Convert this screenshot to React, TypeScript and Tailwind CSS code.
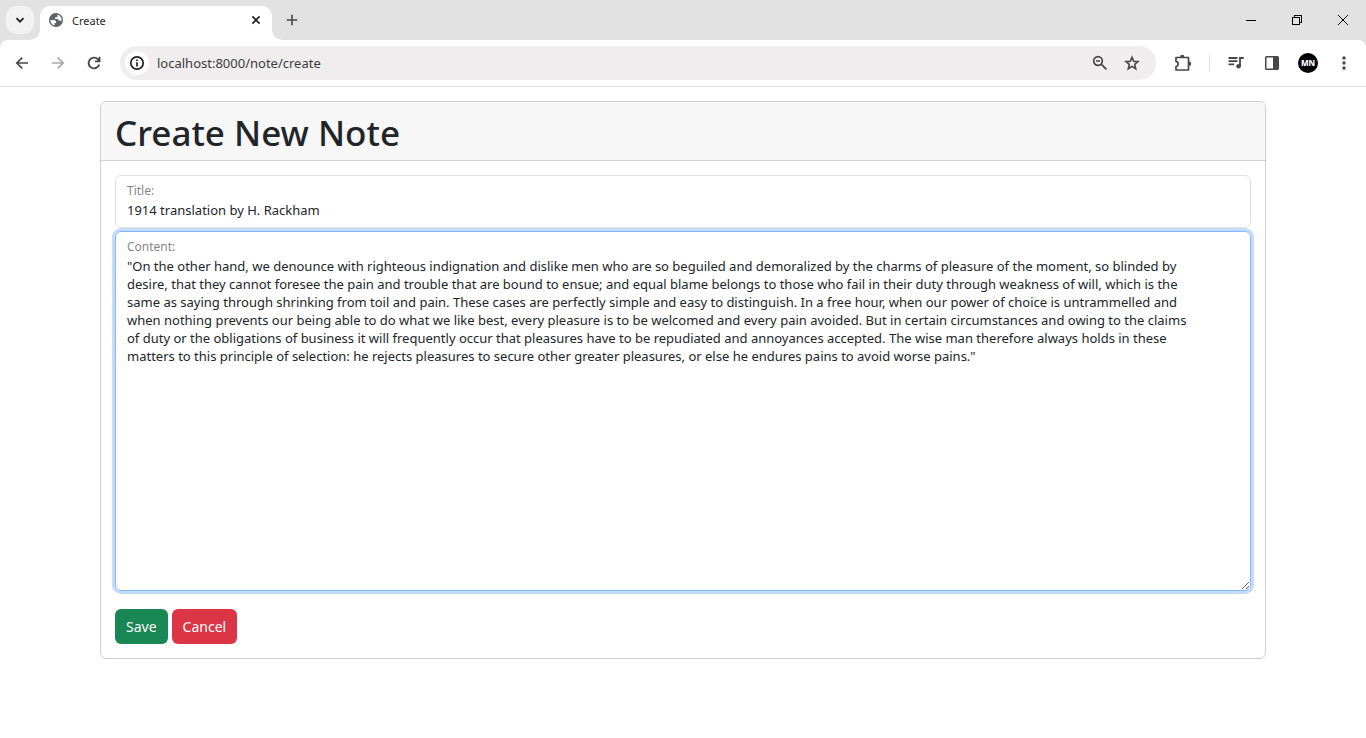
import { useState } from 'react';
import type { ReactNode } from 'react';
import { MdMoreVert } from 'react-icons/md';

const uiFont = "font-['Noto_Sans',sans-serif]";

const noteText = [
  '"On the other hand, we denounce with righteous indignation and dislike men who are so beguiled and demoralized by the charms of pleasure of the moment, so blinded by',
  'desire, that they cannot foresee the pain and trouble that are bound to ensue; and equal blame belongs to those who fail in their duty through weakness of will, which is the',
  'same as saying through shrinking from toil and pain. These cases are perfectly simple and easy to distinguish. In a free hour, when our power of choice is untrammelled and',
  'when nothing prevents our being able to do what we like best, every pleasure is to be welcomed and every pain avoided. But in certain circumstances and owing to the claims',
  'of duty or the obligations of business it will frequently occur that pleasures have to be repudiated and annoyances accepted. The wise man therefore always holds in these',
  'matters to this principle of selection: he rejects pleasures to secure other greater pleasures, or else he endures pains to avoid worse pains."',
].join('\n');

function IconButton({ label, className = '', children }: { label: string; className?: string; children: ReactNode }) {
  return (
    <button type="button" aria-label={label} className={`flex shrink-0 items-center justify-center ${className}`}>
      {children}
    </button>
  );
}

function LineIcon({ size = 16, width = 1.7, children }: { size?: number; width?: number; children: ReactNode }) {
  return (
    <svg width={size} height={size} viewBox={`0 0 ${size} ${size}`} fill="none" stroke="currentColor" strokeWidth={width}>
      {children}
    </svg>
  );
}

function GlobeIcon() {
  return (
    <svg width="16" height="16" viewBox="0 0 16 16" className="shrink-0">
      <circle cx="8" cy="8" r="7" fill="#5f6368" />
      <path d="M2.400 8h3.400c1.600 0 2.300.8 2.300 2v.9H6.500v2.500C4 12.800 2.400 10.600 2.400 8Z" fill="#fff" />
      <path
        d="M9.500 2.600c2.300.6 4.100 2.800 4.100 5.400 0 .5-.1 1-.2 1.400-.4-.6-.9-.9-1.600-.9h-.9c-.5-1.100-1.300-1.500-2.400-1.500H7V5.400h1.200c.8 0 1.300-.5 1.300-1.300Z"
        fill="#fff"
      />
    </svg>
  );
}

function TabStrip() {
  return (
    <div className="flex h-10 items-start bg-[#e2e2e2]">
      <IconButton label="Search tabs" className="mt-1.5 ml-1.5 h-7 w-7 rounded-[10px] bg-[#f1f1f1] text-[#1f1f1f]">
        <LineIcon width={1.8}>
          <path d="M4.500 6.200 8 9.700l3.500-3.500" />
        </LineIcon>
      </IconButton>
      <div className="relative mt-1.5 ml-1.5 flex h-[34px] w-[232px] items-start rounded-t-[10px] bg-white pt-1.5 pr-2 pl-2">
        <svg width="10" height="10" viewBox="0 0 10 10" className="absolute bottom-0 -left-2.5" aria-hidden="true">
          <path d="M10 0v10H0A10 10 0 0 0 10 0Z" fill="#fff" />
        </svg>
        <svg width="10" height="10" viewBox="0 0 10 10" className="absolute -right-2.5 bottom-0" aria-hidden="true">
          <path d="M0 0v10h10A10 10 0 0 1 0 0Z" fill="#fff" />
        </svg>
        <GlobeIcon />
        <span className="ml-2 flex-1 text-[11px] leading-[18px] text-[#1f1f1f]">Create</span>
        <IconButton label="Close tab" className="h-4 w-4 text-[#1f1f1f]">
          <LineIcon width={1.6}>
            <path d="m4.400 4.400 7.200 7.200M11.600 4.400l-7.200 7.200" />
          </LineIcon>
        </IconButton>
      </div>
      <IconButton label="New tab" className="mt-1.5 ml-1.5 h-7 w-7 text-[#474747]">
        <LineIcon width={1.6}>
          <path d="M8 2.700v10.600M2.700 8h10.600" />
        </LineIcon>
      </IconButton>
      <div className="ml-auto flex h-10">
        <IconButton label="Minimize" className="w-[46px]">
          <svg width="10" height="10" viewBox="0 0 10 10" shapeRendering="crispEdges">
            <path d="M0 5.5h10" stroke="#000" />
          </svg>
        </IconButton>
        <IconButton label="Restore" className="w-[46px]">
          <svg width="10" height="10" viewBox="0 0 10 10" fill="none" stroke="#000" shapeRendering="crispEdges">
            <path d="M.5 2.5h7v7h-7zM2.5 2.5v-2h7v7h-2" />
          </svg>
        </IconButton>
        <IconButton label="Close" className="w-[46px]">
          <svg width="10" height="10" viewBox="0 0 10 10" fill="none" stroke="#000">
            <path d="M0 0l10 10M10 0L0 10" />
          </svg>
        </IconButton>
      </div>
    </div>
  );
}

function Toolbar() {
  return (
    <div className="bg-[#e2e2e2]">
      <div className="flex h-[47px] items-center rounded-t-[8px] border-b border-[#dedede] bg-white pr-2 pl-2 text-[#474747]">
        <IconButton label="Back" className="h-7 w-7">
          <LineIcon>
            <path d="M14 8H3M8.200 2.600 2.800 8l5.400 5.400" />
          </LineIcon>
        </IconButton>
        <IconButton label="Forward" className="ml-2 h-7 w-7 text-[#a8a8a8]">
          <LineIcon>
            <path d="M2 8h11M7.800 2.600 13.200 8l-5.400 5.400" />
          </LineIcon>
        </IconButton>
        <IconButton label="Reload" className="ml-2 h-7 w-7">
          <LineIcon width={1.9}>
            <path d="M13.200 9.600A5.400 5.400 0 1 1 12 4.300l1 1.100M13.500 1.800v4.600H8.900" />
          </LineIcon>
        </IconButton>
        <div className="ml-3 flex h-[34px] flex-1 items-center rounded-full bg-[#efedee] pr-3 pl-[5px]">
          <IconButton label="Site information" className="h-6 w-6 rounded-full bg-white text-[#1f1f1f]">
            <LineIcon>
              <circle cx="8" cy="8" r="6.200" />
              <path d="M8 7.200v4.200M8 4.400v1.700" />
            </LineIcon>
          </IconButton>
          <input
            aria-label="Address"
            defaultValue="localhost:8000/note/create"
            className="ml-2 min-w-0 flex-1 bg-transparent pt-0.5 text-[13px] text-[#3c3c3c] outline-none"
          />
          <IconButton label="Zoom" className="h-6 w-6">
            <LineIcon>
              <circle cx="6" cy="6" r="4.300" />
              <path d="m9.200 9.200 5.200 5.200M4 6h4" />
            </LineIcon>
          </IconButton>
          <IconButton label="Bookmark this tab" className="ml-2 h-6 w-6">
            <LineIcon width={1.6}>
              <path d="m8 2.200 1.700 4 4.300.4-3.300 2.800 1 4.300L8 11.400l-3.700 2.300 1-4.300L2 6.600l4.300-.4Z" />
            </LineIcon>
          </IconButton>
        </div>
        <IconButton label="Extensions" className="ml-[13px] h-7 w-7">
          <svg width="18" height="18" viewBox="0 0 18 18">
            <path
              d="M2 3.500h12.500v12.500H2v-3.400c1.300-.2 2.100-1.300 2.100-2.600S3.300 7.600 2 7.400Z"
              fill="none"
              stroke="currentColor"
              strokeWidth="1.700"
              strokeLinejoin="round"
            />
            <path d="M6 3a2.200 2.200 0 0 1 4.400 0ZM15 7.500a2.200 2.200 0 0 1 0 4.400Z" fill="currentColor" />
          </svg>
        </IconButton>
        <span className="mx-3 h-4 w-px bg-[#dcdcdc]" />
        <IconButton label="Media controls" className="h-7 w-7">
          <LineIcon width={1.8}>
            <path d="M.5 3h9M.5 6.200h9M.5 9.400h5.500M12 11V3h3.800" />
            <circle cx="10.600" cy="11.200" r="2.300" fill="currentColor" stroke="none" />
          </LineIcon>
        </IconButton>
        <IconButton label="Side panel" className="ml-2 h-7 w-7">
          <svg width="16" height="16" viewBox="0 0 16 16">
            <path
              fillRule="evenodd"
              d="M2.500 1h11A1.500 1.500 0 0 1 15 2.500v11a1.500 1.500 0 0 1-1.500 1.500h-11A1.500 1.500 0 0 1 1 13.500v-11A1.500 1.500 0 0 1 2.500 1ZM2.500 2.500v11H9v-11Z"
              fill="currentColor"
            />
          </svg>
        </IconButton>
        <IconButton label="Profile" className="ml-2 h-7 w-7">
          <span className="flex h-5 w-5 items-center justify-center rounded-full bg-black text-[8px] font-extrabold text-white">
            MN
          </span>
        </IconButton>
        <IconButton label="Menu" className="ml-2 h-7 w-7">
          <MdMoreVert size={20} />
        </IconButton>
      </div>
    </div>
  );
}

export default function App() {
  const [title, setTitle] = useState('1914 translation by H. Rackham');
  const [content, setContent] = useState(noteText);

  return (
    <div className={`min-h-screen bg-white ${uiFont} text-[#212529]`}>
      <TabStrip />
      <Toolbar />
      <main className="mx-auto max-w-[1188px] px-[11px] pt-3.5 pb-6">
        <section className="rounded-[6px] border border-[#d0d0d0] bg-white">
          <header className="rounded-t-[5px] border-b border-[#cfcfcf] bg-[#f7f7f7] px-3.5 pt-[9px] pb-1.5">
            <h1 className="text-[35px] leading-[43px] font-medium">Create New Note</h1>
          </header>
          <form className="p-3.5" onSubmit={(e) => e.preventDefault()}>
            <div className="flex flex-col rounded-[6px] border border-[#dee2e6] px-[11px] pt-[7px] pb-1.5">
              <label htmlFor="title" className="text-[12px] leading-4 text-[#85888b]">
                Title:
              </label>
              <input
                id="title"
                value={title}
                onChange={(e) => setTitle(e.target.value)}
                className="w-full bg-transparent text-[13px] leading-[22px] outline-none"
              />
            </div>
            <div className="relative mt-[3px] h-[360px] rounded-[6px] border border-[#86b7fe] pt-[7px] ring-[3px] ring-[#c2dbfe]">
              <label htmlFor="content" className="block px-[11px] text-[12px] leading-4 text-[#85888b]">
                Content:
              </label>
              <textarea
                id="content"
                value={content}
                onChange={(e) => setContent(e.target.value)}
                className="block h-[335px] w-full resize-y bg-transparent px-[11px] pt-[2px] text-[13px] leading-[18px] outline-none"
              />
            </div>
            <div className="mt-[18px] flex gap-1 text-[14px] leading-[21px] text-white">
              <button type="submit" className="rounded-[6px] bg-[#198754] px-[11px] py-[7px]">
                Save
              </button>
              <button type="button" className="rounded-[6px] bg-[#dc3545] px-[11px] py-[7px]">
                Cancel
              </button>
            </div>
          </form>
        </section>
      </main>
    </div>
  );
}
